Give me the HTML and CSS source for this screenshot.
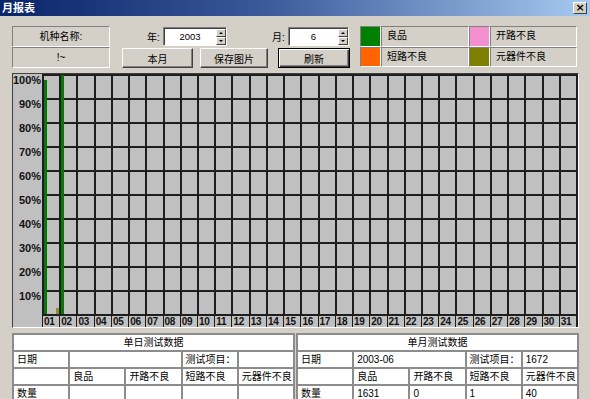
FILE: index.html
```html
<!DOCTYPE html>
<html>
<head>
  <meta charset="utf-8">
  <link rel="stylesheet" href="styles.css">
</head>
<body>
  <div class="window">
    <div class="titlebar">
      <span class="title">月报表</span>
      <span class="close">×</span>
    </div>

    <div class="top">
      <div class="namebox">
        <div class="namecell">机种名称:</div>
        <div class="namecell">!~</div>
      </div>

      <div class="controls">
        <div class="ctrl-row ctrl-fields">
          <span class="lbl">年:</span>
          <div class="spin spin-year">
            <span class="spin-val">2003</span>
            <span class="spin-btns"><i class="up"></i><i class="down"></i></span>
          </div>
          <span class="lbl lbl-month">月:</span>
          <div class="spin spin-month">
            <span class="spin-val">6</span>
            <span class="spin-btns"><i class="up"></i><i class="down"></i></span>
          </div>
        </div>
        <div class="ctrl-row ctrl-buttons">
          <button class="btn btn-month">本月</button>
          <button class="btn btn-save">保存图片</button>
          <button class="btn btn-refresh">刷新</button>
        </div>
      </div>

      <div class="legend">
        <span class="swatch sw-good"></span><span class="legend-label">良品</span>
        <span class="swatch sw-open"></span><span class="legend-label">开路不良</span>
        <span class="swatch sw-short"></span><span class="legend-label">短路不良</span>
        <span class="swatch sw-part"></span><span class="legend-label">元器件不良</span>
      </div>
    </div>

    <div class="chart">
      <div class="chart-main">
        <div class="yaxis">
          <span>100%</span><span>90%</span><span>80%</span><span>70%</span><span>60%</span>
          <span>50%</span><span>40%</span><span>30%</span><span>20%</span><span>10%</span>
        </div>
        <div class="plot">
          <div class="col">
            <span class="bar bar-good" style="height: 97.5%"></span>
            <span class="bar bar-open" style="height: 0%"></span>
            <span class="bar bar-short" style="height: 0.1%"></span>
            <span class="bar bar-part" style="height: 2.4%"></span>
          </div>
          <div class="col">
            <span class="bar bar-good" style="height: 99.6%"></span>
          </div>
          <div class="col"></div><div class="col"></div><div class="col"></div><div class="col"></div>
          <div class="col"></div><div class="col"></div><div class="col"></div><div class="col"></div>
          <div class="col"></div><div class="col"></div><div class="col"></div><div class="col"></div>
          <div class="col"></div><div class="col"></div><div class="col"></div><div class="col"></div>
          <div class="col"></div><div class="col"></div><div class="col"></div><div class="col"></div>
          <div class="col"></div><div class="col"></div><div class="col"></div><div class="col"></div>
          <div class="col"></div><div class="col"></div><div class="col"></div><div class="col"></div>
          <div class="col"></div>
        </div>
      </div>
      <div class="days">
        <div class="days-pad"></div>
        <div class="daygrid">
          <span>01</span><span>02</span><span>03</span><span>04</span><span>05</span><span>06</span>
          <span>07</span><span>08</span><span>09</span><span>10</span><span>11</span><span>12</span>
          <span>13</span><span>14</span><span>15</span><span>16</span><span>17</span><span>18</span>
          <span>19</span><span>20</span><span>21</span><span>22</span><span>23</span><span>24</span>
          <span>25</span><span>26</span><span>27</span><span>28</span><span>29</span><span>30</span>
          <span>31</span>
        </div>
      </div>
    </div>

    <div class="tables">
      <table class="data">
        <tr><td class="head" colspan="5">单日测试数据</td></tr>
        <tr><td>日期</td><td colspan="2"></td><td>测试项目：</td><td></td></tr>
        <tr><td></td><td>良品</td><td>开路不良</td><td>短路不良</td><td>元器件不良</td></tr>
        <tr><td>数量</td><td></td><td></td><td></td><td></td></tr>
      </table>
      <table class="data">
        <tr><td class="head" colspan="5">单月测试数据</td></tr>
        <tr><td>日期</td><td colspan="2">2003-06</td><td>测试项目：</td><td>1672</td></tr>
        <tr><td></td><td>良品</td><td>开路不良</td><td>短路不良</td><td>元器件不良</td></tr>
        <tr><td>数量</td><td>1631</td><td>0</td><td>1</td><td>40</td></tr>
      </table>
    </div>
  </div>
</body>
</html>
```

FILE: styles.css
```css
body {
  margin: 0;
  background: #d4d0c8;
  font-family: "Liberation Sans", "Noto Sans CJK SC", sans-serif;
  font-size: 10px;
  color: #000;
}
.window {
  width: 590px;
  height: 399px;
  overflow: hidden;
  background: #d4d0c8;
}
.titlebar {
  height: 16px;
  display: flex;
  align-items: center;
  justify-content: space-between;
  padding: 0 3px 0 2px;
  background: linear-gradient(to right, #0a246a, #3a5a9a 45%, #a6caf0);
  color: white;
}
.title {
  font-weight: bold;
  font-size: 11px;
  line-height: 16px;
}
.close {
  width: 14px;
  height: 12px;
  box-sizing: border-box;
  background: #d4d0c8;
  border: 1px solid;
  border-color: #fff #404040 #404040 #fff;
  color: #000;
  font: bold 11px/10px "DejaVu Sans", sans-serif;
  text-align: center;
}
.top {
  display: flex;
  height: 52px;
  box-sizing: border-box;
  padding: 10px 0 0 12px;
}
.namebox {
  width: 98px;
  display: flex;
  flex-direction: column;
}
.namecell {
  height: 21px;
  box-sizing: border-box;
  border: 1px solid;
  border-color: #808080 #fff #fff #808080;
  text-align: center;
  line-height: 19px;
}
.controls {
  margin-left: 12px;
  width: 228px;
  display: flex;
  flex-direction: column;
}
.ctrl-row {
  display: flex;
  height: 21px;
}
.ctrl-fields {
  align-items: center;
  padding-left: 25px;
}
.ctrl-buttons {
  align-items: flex-end;
}
.lbl {
  width: 16px;
}
.lbl-month {
  margin-left: 45px;
}
.spin {
  height: 19px;
  box-sizing: border-box;
  display: flex;
  background: white;
  border: 1px solid;
  border-color: #808080 #fff #fff #808080;
  box-shadow: inset 1px 1px #404040;
}
.spin-year {
  width: 64px;
}
.spin-month {
  width: 61px;
}
.spin-val {
  flex: 1;
  text-align: center;
  line-height: 17px;
  font-size: 9.5px;
}
.spin-btns {
  width: 10px;
  display: flex;
  flex-direction: column;
  padding: 1px 0 0;
}
.spin-btns i {
  flex: 1;
  display: flex;
  align-items: center;
  justify-content: center;
  background: #d4d0c8;
  border: 1px solid;
  border-color: #fff #404040 #404040 #fff;
}
.spin-btns .up:after {
  content: "";
  border-left: 2px solid transparent;
  border-right: 2px solid transparent;
  border-bottom: 2px solid #000;
}
.spin-btns .down:after {
  content: "";
  border-left: 2px solid transparent;
  border-right: 2px solid transparent;
  border-top: 2px solid #000;
}
.btn {
  height: 20px;
  padding: 0;
  font-family: "Noto Sans CJK SC", sans-serif;
  font-size: 10px;
  background: #d4d0c8;
  border: 1px solid;
  border-color: #fff #404040 #404040 #fff;
  box-shadow: inset -1px -1px #808080;
}
.btn-month {
  width: 71px;
}
.btn-save {
  width: 68px;
  margin-left: 7px;
}
.btn-refresh {
  width: 72px;
  margin-left: 10px;
  border-color: #000;
  box-shadow: inset 1px 1px #fff, inset -1px -1px #404040, inset -2px -2px #808080;
}
.legend {
  margin-left: 10px;
  width: 217px;
  height: 41px;
  display: grid;
  grid-template-columns: 21px 88px 21px 87px;
  grid-template-rows: 21px 20px;
}
.swatch,
.legend-label {
  box-sizing: border-box;
  border: 1px solid;
  border-color: #808080 #fff #fff #808080;
}
.legend-label {
  padding-left: 5px;
  line-height: 18px;
}
.sw-good { background: #008000; }
.sw-open { background: #f590d0; }
.sw-short { background: #ff6400; }
.sw-part { background: #808000; }

.chart {
  margin: 5px 0 0 12px;
  width: 567px;
  box-sizing: border-box;
  border: 1px solid;
  border-color: #404040 #fff #fff #404040;
  background: #c0c0c0;
}
.chart-main {
  display: flex;
  height: 240px;
}
.yaxis {
  width: 29px;
  display: flex;
  flex-direction: column;
}
.yaxis span {
  flex: 1;
  text-align: right;
  padding-right: 1px;
  font: bold 11px/13px "Liberation Sans", sans-serif;
  color: #111;
}
.plot {
  flex: 1;
  display: grid;
  grid-template-columns: repeat(31, 1fr);
  border-right: 2px solid #1e1e1e;
  background-image: linear-gradient(#1e1e1e 2px, transparent 2px);
  background-size: 100% 24px;
}
.col {
  border-left: 2px solid #1e1e1e;
  display: flex;
  align-items: flex-end;
  gap: 1px;
}
.bar {
  width: 3px;
}
.bar-good { background: #0a760a; }
.bar-open { background: #f590d0; }
.bar-short { background: #ff6400; }
.bar-part { background: #909020; }

.days {
  display: flex;
}
.days-pad {
  width: 29px;
}
.daygrid {
  flex: 1;
  display: grid;
  grid-template-columns: repeat(31, 1fr);
  border-top: 2px solid #1e1e1e;
  border-right: 2px solid #1e1e1e;
}
.daygrid span {
  border-left: 1px solid #1e1e1e;
  padding-left: 1px;
  font: bold 10px/11px "Liberation Sans", sans-serif;
  letter-spacing: -0.3px;
  color: #111;
}

.tables {
  display: flex;
  gap: 1px;
  margin: 5px 0 0 12px;
}
.data {
  width: 283px;
  table-layout: fixed;
  border-collapse: separate;
  border-spacing: 0;
  border: 1px solid #8c8c8c;
  background: white;
  font-size: 10px;
}
.data td {
  height: 15px;
  border: 1px solid #8c8c8c;
  padding: 0 3px;
  line-height: 15px;
  white-space: nowrap;
  overflow: hidden;
}
.data .head {
  text-align: center;
}
```
